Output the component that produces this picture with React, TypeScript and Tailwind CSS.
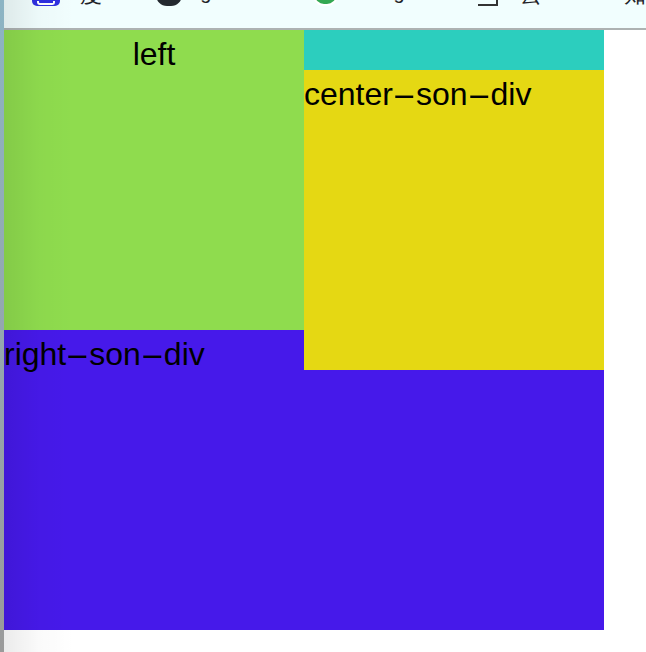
const FONT = { fontFamily: '"Liberation Sans", Arial, sans-serif' };

// hyphens in the reference render much wider than Arial's, so stretch them
function Label({ text }: { text: string }) {
  const parts = text.split("-");
  return (
    <>
      {parts.map((p, i) => (
        <span key={i}>
          {p}
          {i < parts.length - 1 && (
            <span className="inline-block w-[23px] text-center">
              <span className="inline-block scale-x-[2.3]">-</span>
            </span>
          )}
        </span>
      ))}
    </>
  );
}

function BookmarkBar() {
  return (
    <div className="h-[30px] overflow-hidden border-b-2 border-[#adb2b2] bg-[#f1fefe]">
      <div
        className="-mt-[16px] flex h-[22px] items-end text-[22px] leading-[22px] text-[#1f2328]"
        style={FONT}
      >
        <div className="ml-[28px] flex h-[22px] w-[31px] items-end justify-center rounded-[5px] bg-[#2f2fe0] pb-[1px]">
          <div className="h-[4px] w-[18px] rounded-b-[3px] border-x-2 border-b-2 border-white" />
        </div>
        <span className="ml-[20px] text-[22px]">百度</span>
        <div className="ml-[36px] h-[22px] w-[29px] rounded-full bg-[#24292f]" />
        <span className="ml-[18px] pb-[4px] text-[20px] leading-[20px]">github</span>
        <div className="ml-[58px] h-[22px] w-[27px] rounded-full border-2 border-white bg-[#34a853]" />
        <span className="ml-[18px] pb-[4px] text-[20px] leading-[20px]">Google</span>
        <div className="ml-[58px] h-[24px] w-[22px] border-b-2 border-r-2 border-[#333]" />
        <span className="ml-[22px] text-[22px]">有道云</span>
        <span className="ml-[44px] text-[22px]">知</span>
      </div>
    </div>
  );
}

export default function App() {
  return (
    <div className="flex h-[652px] w-[646px] overflow-hidden bg-white" style={FONT}>
      <div className="h-full w-[4px] shrink-0 bg-gradient-to-b from-[#8cb4c4] to-[#9a9a9a]" />
      <div className="relative flex-1">
        <BookmarkBar />
        <div className="grid w-[600px] grid-cols-[300px_300px] grid-rows-[40px_260px_40px_260px] text-[32px] leading-[48px] text-black">
          <div className="col-start-1 row-span-2 row-start-1 bg-[#8fdc4e] text-center">left</div>
          <div className="col-start-2 row-start-1 bg-[#2ccebe]" />
          <div className="z-10 col-start-2 row-span-2 row-start-2 bg-[#e5d813]">
            <Label text="center-son-div" />
          </div>
          <div className="col-span-2 col-start-1 row-span-2 row-start-3 bg-[#4619ea]">
            <Label text="right-son-div" />
          </div>
        </div>
        {/* window shadow along the left edge */}
        <div className="pointer-events-none absolute inset-y-0 left-0 z-20 w-[70px] bg-gradient-to-r from-black/[0.08] via-black/[0.02] to-transparent" />
      </div>
    </div>
  );
}
